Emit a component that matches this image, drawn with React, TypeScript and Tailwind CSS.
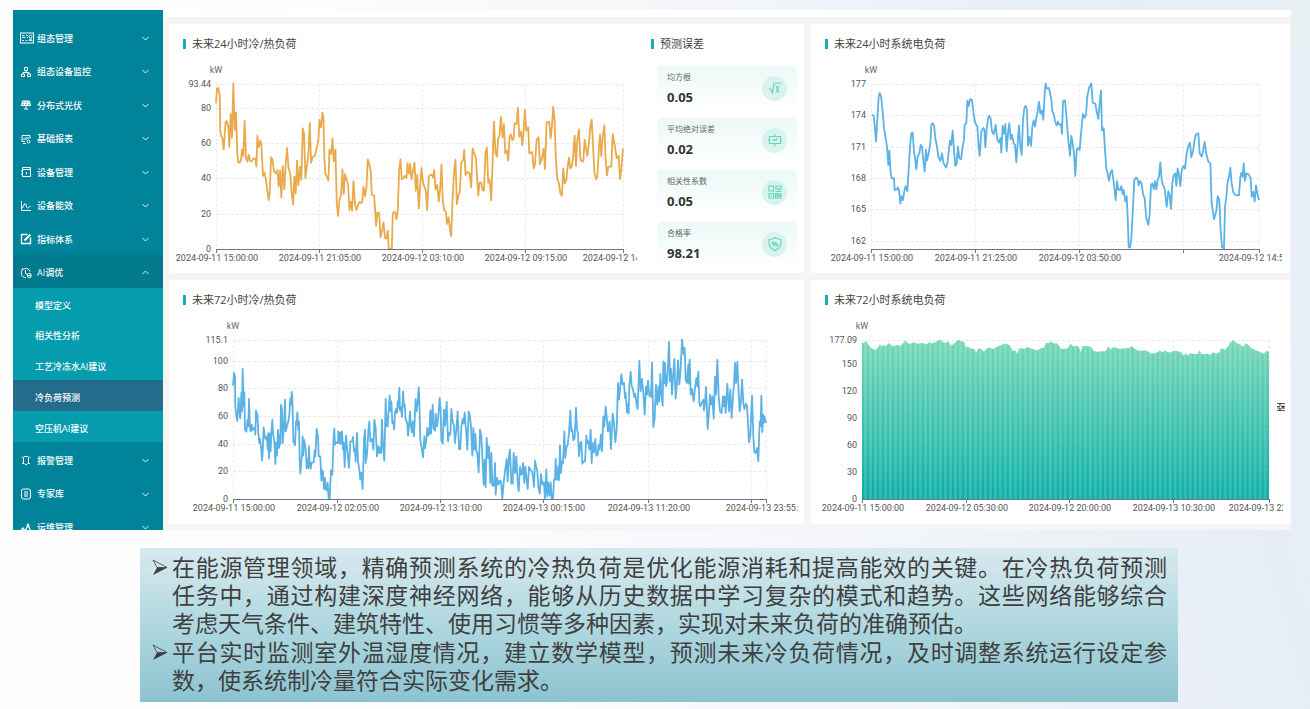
import { useLayoutEffect, useRef, useState } from "react";
import type { ReactNode } from "react";

type Tick = { at: number; label: string };

type ChartProps = {
  height: number;
  left: number;
  right: number;
  bottom: number;
  yTicks: Tick[];
  xTicks: Tick[];
  children: ReactNode;
};

// plot series are drawn in the plot's own units, 3 per pixel at the default size
const COLD_24H =
  "154,250 157,206 161,204 165,225 167,335 170,350 173,353 177,388 180,345 183,305 186,303 191,320 194,380 198,282 202,352 206,190 210,330 214,278 218,400 221,428 225,428 229,420 232,388 236,408 240,303 244,415 248,425 252,404 256,422 261,424 266,415 272,416 275,440 278,348 282,382 287,362 290,375 295,468 299,457 303,475 307,505 312,540 315,520 319,412 323,418 328,455 334,460 338,450 342,500 346,452 350,532 354,438 359,508 363,430 367,384 371,440 377,465 381,520 385,553 389,470 393,520 397,422 401,496 406,440 410,480 414,325 418,340 422,474 428,425 431,400 435,309 439,428 443,412 450,408 456,385 461,358 464,300 469,322 473,278 476,290 479,420 482,462 487,470 491,482 494,390 499,402 503,355 507,424 512,388 516,550 520,588 524,540 529,525 533,448 537,522 541,462 546,482 550,492 554,570 558,545 562,572 566,484 571,555 575,570 580,555 584,546 590,550 593,540 596,500 601,528 605,500 609,418 614,435 618,455 621,525 628,527 634,617 638,577 643,580 647,651 652,632 656,607 661,655 666,655 669,632 672,686 681,686 684,580 688,575 692,580 695,597 699,570 703,450 707,418 711,478 716,475 720,468 725,474 728,430 732,460 736,432 740,478 744,455 749,428 753,512 757,465 762,565 766,500 770,444 775,490 783,512 787,570 792,470 797,464 802,466 805,472 808,450 812,508 817,495 822,545 826,505 830,434 834,545 838,570 843,575 846,612 851,592 855,625 859,648 863,540 868,450 872,420 876,552 881,525 885,515 889,428 895,420 898,390 902,465 907,456 914,460 919,502 923,385 928,400 933,415 940,527 944,488 949,487 953,510 957,512 962,395 966,383 970,488 974,478 979,541 983,430 987,305 992,400 996,410 1000,355 1004,345 1008,291 1013,352 1017,312 1021,400 1026,392 1030,422 1034,350 1038,343 1042,360 1046,357 1049,310 1055,312 1059,264 1063,350 1068,335 1072,376 1076,335 1080,270 1084,332 1090,322 1093,400 1102,396 1106,445 1110,435 1115,360 1121,352 1125,432 1131,415 1136,386 1140,447 1145,308 1153,305 1157,355 1161,320 1165,260 1169,300 1172,400 1177,478 1182,490 1186,520 1191,527 1195,445 1199,490 1204,480 1207,450 1212,413 1216,445 1221,440 1225,400 1229,347 1233,438 1237,360 1242,328 1246,415 1250,424 1255,424 1259,360 1267,408 1272,370 1276,320 1280,299 1284,370 1288,455 1293,478 1297,470 1301,400 1305,344 1309,408 1313,350 1318,316 1322,420 1326,466 1330,440 1339,440 1343,342 1349,375 1355,415 1361,407 1365,477 1369,450 1374,385";

const POWER_24H =
  "202,345 207,348 210,375 214,425 218,360 222,290 225,280 229,290 234,335 238,385 243,415 247,440 251,495 254,452 258,520 261,535 268,534 270,570 276,568 280,562 283,570 287,610 291,588 295,600 299,572 303,558 308,573 312,510 316,440 320,400 324,398 328,455 332,480 335,508 339,470 344,460 348,435 352,440 356,480 360,515 364,450 367,482 372,460 377,430 380,375 384,370 388,376 392,415 397,440 401,470 407,483 412,460 416,487 421,498 425,503 429,485 432,455 436,422 440,435 444,392 448,450 452,498 456,490 460,440 464,475 469,478 474,440 478,420 480,375 485,370 488,303 492,320 496,298 502,300 506,335 511,368 518,380 522,440 525,468 530,395 536,384 539,388 542,442 546,390 550,355 554,348 558,358 562,395 567,403 573,375 578,420 583,428 587,415 590,458 594,378 598,402 602,373 606,454 610,400 614,370 618,418 622,405 627,430 631,435 635,487 639,430 643,377 647,440 651,465 655,360 659,325 663,318 667,330 670,436 674,410 679,438 683,380 687,362 691,380 696,350 699,335 703,306 707,342 712,332 716,360 720,280 723,252 726,267 733,265 737,285 740,300 743,335 748,345 751,365 756,377 760,365 763,374 769,374 772,402 775,305 781,302 785,345 789,400 793,440 796,468 800,408 804,430 808,460 812,528 816,450 820,444 825,450 830,390 835,342 840,354 844,345 848,290 853,265 860,251 864,308 872,312 877,340 881,357 885,310 889,273 892,392 897,385 901,450 905,505 909,520 913,542 917,520 922,510 927,545 933,600 937,543 941,568 946,570 950,558 954,582 957,570 962,604 966,588 969,650 972,740 976,742 980,715 985,620 989,540 995,532 999,538 1002,556 1006,543 1011,550 1015,582 1020,595 1025,655 1031,674 1035,640 1039,555 1043,550 1047,567 1051,543 1055,568 1059,540 1063,530 1067,487 1071,540 1075,555 1080,565 1086,620 1091,573 1095,585 1099,626 1103,550 1107,525 1112,520 1115,557 1119,505 1123,525 1127,558 1131,510 1136,498 1141,506 1146,460 1151,438 1156,428 1160,472 1165,455 1169,425 1173,405 1181,400 1185,460 1191,470 1195,455 1200,426 1205,462 1211,485 1217,490 1221,610 1225,635 1228,657 1233,640 1236,625 1239,588 1244,600 1248,690 1252,740 1258,745 1261,620 1265,590 1269,545 1273,530 1277,503 1281,550 1286,577 1292,584 1303,586 1307,530 1310,519 1314,530 1317,490 1321,542 1325,520 1332,523 1338,535 1341,590 1346,575 1350,604 1354,556 1358,580 1363,600";

const COLD_72H =
  "205,318 208,280 211,290 212,380 214,400 218,424 222,355 225,400 227,416 230,340 232,395 234,268 237,380 239,338 241,450 245,456 249,420 251,440 253,358 256,445 258,455 261,435 263,452 268,445 271,443 272,465 274,392 276,415 278,403 281,460 284,490 286,478 289,500 292,542 294,520 297,443 301,475 305,480 307,470 309,510 311,460 313,537 316,462 318,515 320,460 323,420 325,460 329,485 332,553 335,488 337,528 340,450 343,505 345,465 347,495 349,375 352,390 354,490 358,440 361,360 363,455 367,440 371,425 374,405 377,356 379,375 381,337 383,350 386,485 391,497 394,425 396,435 398,398 401,450 403,425 405,540 407,582 410,540 412,530 414,470 416,528 418,480 421,495 424,520 426,565 429,540 431,566 433,500 435,550 438,567 441,548 447,548 450,512 452,530 456,448 460,470 462,530 467,530 470,603 473,572 475,580 478,628 481,595 484,630 487,632 489,610 492,657 495,657 499,572 503,585 507,470 509,447 511,495 516,488 520,490 521,455 524,490 526,458 529,493 532,455 535,510 537,488 540,562 544,468 547,500 553,565 557,485 562,485 565,472 568,515 571,508 573,545 577,460 580,545 584,570 587,600 590,580 594,628 598,480 601,450 603,550 607,525 611,455 614,425 617,485 622,478 626,510 629,420 633,445 637,530 641,500 644,520 647,503 649,520 652,420 655,500 659,543 663,358 666,440 669,440 672,395 675,348 678,395 680,365 683,430 686,425 688,450 691,400 694,388 697,400 699,365 701,385 704,325 706,393 709,382 712,412 715,335 718,380 720,375 723,420 728,430 730,468 733,440 736,395 739,440 742,458 745,425 748,470 751,400 753,358 756,395 759,370 762,323 764,360 767,480 770,500 775,533 779,470 781,505 785,480 788,445 791,468 794,460 797,392 799,462 804,376 807,448 811,453 813,402 817,440 821,410 825,355 828,390 830,480 834,492 838,390 841,438 846,367 850,485 853,460 857,465 860,388 864,425 868,440 871,490 875,450 879,395 883,508 887,508 890,440 894,418 897,432 900,398 904,450 908,510 912,395 916,410 919,440 923,528 926,445 929,510 932,463 935,515 938,520 942,578 946,450 950,470 953,530 957,615 960,540 963,622 966,475 970,535 973,500 977,610 980,520 983,618 988,618 991,550 993,645 997,595 1001,615 1005,603 1009,605 1013,657 1017,608 1021,575 1026,538 1029,605 1033,530 1036,510 1040,612 1044,612 1047,520 1051,580 1055,530 1059,610 1062,635 1066,562 1070,585 1073,580 1075,550 1079,610 1082,560 1086,600 1089,628 1093,562 1097,570 1102,575 1105,590 1108,622 1111,543 1114,560 1118,575 1121,620 1125,642 1129,583 1133,615 1138,608 1141,657 1145,570 1148,650 1151,608 1155,648 1158,608 1161,657 1165,657 1168,600 1171,600 1173,538 1176,600 1179,595 1181,560 1183,602 1186,497 1189,580 1192,545 1195,550 1199,455 1202,535 1205,505 1209,495 1213,460 1217,393 1220,455 1223,450 1226,482 1230,475 1234,384 1237,450 1240,460 1243,530 1247,490 1250,486 1253,552 1257,545 1261,545 1265,468 1268,490 1271,485 1274,510 1278,450 1281,550 1284,490 1288,518 1292,478 1295,528 1299,525 1302,495 1305,510 1309,465 1312,515 1316,410 1319,440 1323,380 1327,420 1330,455 1335,425 1339,508 1344,402 1348,430 1352,488 1356,450 1360,310 1363,360 1366,330 1370,284 1374,315 1378,310 1381,355 1383,340 1387,398 1389,375 1392,402 1394,318 1398,277 1401,318 1405,330 1409,352 1412,343 1416,375 1419,388 1424,244 1428,335 1432,298 1436,340 1440,405 1444,320 1447,345 1450,303 1454,348 1457,340 1459,352 1462,248 1466,442 1470,415 1474,315 1478,375 1482,320 1484,365 1487,283 1490,340 1494,378 1496,245 1499,310 1501,250 1504,320 1508,300 1513,187 1516,305 1519,268 1522,345 1526,280 1529,238 1533,357 1537,310 1540,242 1544,315 1548,265 1552,180 1557,225 1560,205 1563,300 1567,310 1571,255 1573,312 1575,240 1578,345 1582,328 1587,365 1591,325 1595,295 1598,320 1601,276 1604,370 1607,380 1611,370 1616,360 1618,392 1621,370 1624,322 1629,448 1632,410 1636,345 1639,375 1643,350 1647,417 1651,292 1654,345 1658,240 1662,350 1666,395 1671,400 1675,350 1678,380 1680,350 1683,400 1688,313 1691,365 1693,395 1697,330 1701,415 1705,350 1708,310 1711,250 1714,310 1718,247 1721,320 1725,395 1729,365 1732,300 1736,370 1739,388 1744,372 1747,380 1750,430 1753,488 1757,465 1762,348 1766,470 1769,518 1773,520 1777,505 1781,545 1785,425 1788,440 1790,348 1793,457 1795,405 1797,430 1799,410 1804,430";

const POWER_72H =
  "172,190 178,190 183,183 188,190 195,200 203,207 210,210 217,208 222,200 226,192 230,200 237,197 245,198 254,190 260,197 268,200 276,196 284,198 292,196 297,188 303,182 309,190 316,193 328,188 340,192 352,190 366,194 376,186 382,192 392,186 397,185 404,180 410,182 415,188 423,190 430,185 437,195 443,197 450,190 456,184 463,180 470,185 478,186 484,203 494,203 503,208 510,208 515,220 522,205 530,208 538,216 545,208 555,203 562,208 570,206 580,200 590,196 600,192 610,194 617,198 625,215 632,212 638,222 644,206 652,206 660,208 668,202 680,206 690,210 700,212 708,206 718,204 724,190 732,190 740,185 748,192 755,190 762,196 770,208 780,207 790,206 798,192 806,200 818,198 824,204 829,218 835,198 850,200 860,202 868,214 880,216 905,214 911,200 918,208 930,202 945,208 960,206 972,206 983,199 990,208 1000,212 1010,214 1022,212 1032,216 1042,222 1052,220 1060,218 1066,212 1074,218 1082,212 1090,218 1100,218 1108,213 1118,214 1130,218 1138,228 1144,220 1150,228 1158,220 1170,224 1180,222 1185,212 1192,224 1210,222 1218,226 1226,218 1236,222 1246,216 1250,206 1262,210 1270,202 1276,190 1286,181 1294,188 1302,192 1310,196 1317,202 1323,191 1332,196 1342,206 1350,210 1360,214 1370,218 1378,222 1386,214 1394,216";

const PLOT_TOP = 20;

function scale(labels: string[], min: number, max: number): Tick[] {
  return labels.map((label) => ({
    at: (Number(label) - min) / (max - min),
    label,
  }));
}

function Chart({
  height,
  left,
  right,
  bottom,
  yTicks,
  xTicks,
  children,
}: ChartProps) {
  const ref = useRef<HTMLDivElement>(null);
  const [width, setWidth] = useState(0);

  useLayoutEffect(() => {
    const el = ref.current;
    if (!el) return;
    const measure = () => setWidth(el.clientWidth);
    measure();
    const observer = new ResizeObserver(measure);
    observer.observe(el);
    return () => observer.disconnect();
  }, []);

  const plotW = Math.max(width - left - right, 0);
  const plotH = bottom - PLOT_TOP;

  return (
    <div ref={ref} className="min-w-0 overflow-hidden">
      <svg
        width={width}
        height={height}
        className="block font-['Roboto',sans-serif] text-[9px]"
      >
        {yTicks.map((t) => {
          const y = Math.round(bottom - t.at * plotH);
          return (
            <g key={t.label}>
              <line
                x1={left}
                x2={left + plotW}
                y1={y + 0.5}
                y2={y + 0.5}
                stroke="#e8e8e8"
                strokeDasharray="3 2"
              />
              <text x={left - 5} y={y + 3} textAnchor="end" fill="#555">
                {t.label}
              </text>
            </g>
          );
        })}
        {xTicks.map((t) => {
          const x = Math.round(left + t.at * plotW);
          return (
            <g key={t.at}>
              <line
                x1={x + 0.5}
                x2={x + 0.5}
                y1={PLOT_TOP}
                y2={bottom}
                stroke="#ededed"
                strokeDasharray="3 2"
              />
              <text x={x + 1} y={bottom + 12} textAnchor="middle" fill="#555">
                {t.label}
              </text>
            </g>
          );
        })}
        <text x={left} y={9} textAnchor="middle" fill="#5f6679">
          kW
        </text>
        <svg
          x={left}
          y={PLOT_TOP}
          width={plotW}
          height={plotH}
          overflow="visible"
        >
          {children}
        </svg>
        <line
          x1={left}
          x2={left + plotW}
          y1={bottom + 0.5}
          y2={bottom + 0.5}
          stroke="#6e7791"
        />
        {xTicks.map((t) => {
          const x = Math.round(left + t.at * plotW) + 0.5;
          return (
            <line
              key={t.at}
              x1={x}
              x2={x}
              y1={bottom}
              y2={bottom + 4}
              stroke="#6e7791"
            />
          );
        })}
      </svg>
    </div>
  );
}

function Line({
  points,
  viewBox,
  color,
}: {
  points: string;
  viewBox: string;
  color: string;
}) {
  return (
    <svg
      width="100%"
      height="100%"
      viewBox={viewBox}
      preserveAspectRatio="none"
      overflow="visible"
    >
      <polyline
        points={points}
        fill="none"
        stroke={color}
        strokeWidth="1.8"
        strokeLinejoin="round"
        vectorEffect="non-scaling-stroke"
      />
    </svg>
  );
}

function Bars() {
  const outline = `172,658 ${POWER_72H} 1394,658`;
  return (
    <svg
      width="100%"
      height="100%"
      viewBox="172 181 1222 477"
      preserveAspectRatio="none"
      overflow="visible"
    >
      <defs>
        <linearGradient id="bars" x1="0" y1="0" x2="0" y2="1">
          <stop offset="0" stopColor="#74d7b6" />
          <stop offset="1" stopColor="#08aea6" />
        </linearGradient>
        <pattern
          id="gaps"
          width="15"
          height="477"
          x="172"
          patternUnits="userSpaceOnUse"
        >
          <rect x="6" width="9" height="477" fill="#fff" fillOpacity="0.16" />
        </pattern>
      </defs>
      <polygon points={outline} fill="url(#bars)" />
      <polygon points={outline} fill="url(#gaps)" />
    </svg>
  );
}

function Title({ children }: { children: ReactNode }) {
  return (
    <h2 className="flex h-10 items-center gap-1.5 px-3.5 text-[11px] text-[#444]">
      <span className="h-2.5 w-[3px] bg-[#14b3a9]" />
      {children}
    </h2>
  );
}

function Icon({
  children,
  strokeWidth = 1,
}: {
  children: ReactNode;
  strokeWidth?: number;
}) {
  return (
    <svg
      width="12"
      height="12"
      viewBox="0 0 12 12"
      fill="none"
      stroke="currentColor"
      strokeWidth={strokeWidth}
      className="shrink-0 overflow-visible"
    >
      {children}
    </svg>
  );
}

const topMenu = [
  {
    label: "组态管理",
    icon: (
      <svg
        width="14"
        height="12"
        viewBox="0 0 14 12"
        fill="none"
        stroke="currentColor"
        className="-mr-0.5 shrink-0"
      >
        <rect x="0.5" y="1" width="13" height="10" />
        <path
          d="M2 3.500h2.500M2 5.500h3.500M2 8.500h2M5.500 8.500h2M6 3.500h2M7 5.500h1M9 8.500h3.500M9 7.200h3"
          strokeWidth="0.900"
        />
        <circle cx="10.500" cy="4.500" r="1.500" strokeWidth="0.900" />
      </svg>
    ),
  },
  {
    label: "组态设备监控",
    icon: (
      <Icon>
        <path d="M4.500 1.500h3v3h-3zM1.500 8h3v2.500h-3zM7.500 8h3v2.500h-3zM6 4.500v2M3 8V6.500h6V8" />
      </Icon>
    ),
  },
  {
    label: "分布式光伏",
    icon: (
      <Icon>
        <path d="M2.500 2h7l1 4.500h-9z" fill="currentColor" fillOpacity="0.4" />
        <path d="M2 4.300h8M4.700 2v4.500M7.300 2v4.500M6 6.500V10M4 10h4" />
      </Icon>
    ),
  },
  {
    label: "基础报表",
    icon: (
      <Icon>
        <path d="M5 8.500H2v-6h8v3M4 7V5M6 7V4M8 6V4M3 10.500h3" />
        <circle cx="8.500" cy="8.500" r="1.500" />
      </Icon>
    ),
  },
  {
    label: "设备管理",
    icon: (
      <Icon>
        <path d="M2.500 1.500h8v9h-8zM3 3.500h7M1 5h2M1 8h2M6.500 6v2.500" />
      </Icon>
    ),
  },
  {
    label: "设备能效",
    icon: (
      <Icon>
        <path d="M1.500 1v9.500H11M2 8c2 0 1.500-4.500 3-4.500S6 8 7.500 8 9 6 10.500 6.500" />
      </Icon>
    ),
  },
  {
    label: "指标体系",
    icon: (
      <Icon>
        <path d="M7.500 1.500h-6v9h9v-6" strokeWidth="1.300" />
        <path d="M4.500 7.500L10.500 1.500" strokeWidth="2" />
      </Icon>
    ),
  },
  {
    label: "AI调优",
    open: true,
    icon: (
      <Icon>
        <path d="M6 10.500A4.500 4.500 0 1 1 10 4.500M3 1.500l-1.500 1M5.500 3v3.500l2 1" />
        <rect x="7.500" y="6.500" width="3.500" height="4" rx="1" />
        <path d="M8 8.500h3" />
      </Icon>
    ),
  },
];

const subMenu = [
  "模型定义",
  "相关性分析",
  "工艺冷冻水AI建议",
  "冷负荷预测",
  "空压机AI建议",
];

const bottomMenu = [
  {
    label: "报警管理",
    icon: (
      <Icon>
        <path d="M3.500 9V3.500a1 1 0 0 1 1-1h3a1 1 0 0 1 1 1V9M2 9.500h2.500M7.500 9.500H10M5 10.500h2M1.500 3l1 .5M10.500 3l-1 .5" />
      </Icon>
    ),
  },
  {
    label: "专家库",
    icon: (
      <Icon>
        <rect x="1.500" y="1" width="9" height="10" rx="2" />
        <path d="M4 4h4M4 6h4M4 8h4" />
      </Icon>
    ),
  },
  {
    label: "运维管理",
    icon: (
      <Icon>
        <path d="M1 8l2-2 2 3 3-6 3 7" strokeWidth="1.300" />
        <circle cx="8" cy="3" r="1" />
      </Icon>
    ),
  },
];

function MenuItem({
  label,
  icon,
  open,
}: {
  label: string;
  icon: ReactNode;
  open?: boolean;
}) {
  return (
    <button
      type="button"
      className={`flex w-full flex-1 items-center gap-[5px] pt-[3px] pr-3.5 pl-[7px] text-left ${
        open ? "bg-[#017a8d]" : ""
      }`}
    >
      {icon}
      <span className="flex-1">{label}</span>
      <svg
        width="7"
        height="5"
        viewBox="0 0 7 5"
        fill="none"
        stroke="currentColor"
        strokeWidth="0.900"
      >
        <path d={open ? "M.5 4l3-3 3 3" : "M.5 1l3 3 3-3"} />
      </svg>
    </button>
  );
}

function Sidebar() {
  return (
    <nav className="flex h-[520px] w-[150px] shrink-0 flex-col overflow-hidden bg-[#018499] pt-2.5 text-[9px] font-medium text-white">
      <div className="flex h-[268px] shrink-0 flex-col">
        {topMenu.map((m) => (
          <MenuItem key={m.label} {...m} />
        ))}
      </div>
      <div className="flex h-[154px] shrink-0 flex-col bg-[#059cad]">
        {subMenu.map((label) => (
          <a
            key={label}
            href="#"
            className={`flex flex-1 items-center pt-1 pl-[22px] ${
              label === "冷负荷预测" ? "bg-[#236c8c]" : ""
            }`}
          >
            {label}
          </a>
        ))}
      </div>
      <div className="flex h-[101px] shrink-0 flex-col">
        {bottomMenu.map((m) => (
          <MenuItem key={m.label} {...m} />
        ))}
      </div>
    </nav>
  );
}

const metrics = [
  {
    label: "均方根",
    value: "0.05",
    icon: (
      <path d="M0 7h1.500l2 4L5 1h7.500M6.500 3.500c1.500 0 2.500 7 4 7M10.500 3.500c-1.500 0-2.500 7-4 7" />
    ),
  },
  {
    label: "平均绝对误差",
    value: "0.02",
    icon: (
      <path d="M.5 2.500h11v7H.5zM6 .5v2M6 9.500v2.500M3.500 7l1.500-1.500 1.500 1 2-2M-1 6h1.500M11.500 6H13" />
    ),
  },
  {
    label: "相关性系数",
    value: "0.05",
    icon: (
      <path d="M0 0h4.500v5H0zM0 7.500h4.500V12H0zM7 0h5v3H7zM6.500 5.500H12.500M6.500 7.500h2V12h-2zM10 7.500h2V12h-2zM6.500 9.500H12M2.200 9v1.500M9.500 3v2.500" />
    ),
  },
  {
    label: "合格率",
    value: "98.21",
    icon: (
      <>
        <path d="M6-.5c1.500 1 4 2 6 2v4c0 3.500-3 5.500-6 7-3-1.500-6-3.500-6-7v-4c2 0 4.500-1 6-2zM4.500 8.500l3-5" />
        <circle cx="4" cy="5" r="1" />
        <circle cx="8" cy="7" r="1" />
      </>
    ),
  },
];

function Metrics() {
  return (
    <section className="w-[167px] shrink-0">
      <Title>预测误差</Title>
      <dl className="mt-0.5 flex flex-col gap-2 pr-[7px] pl-5">
        {metrics.map((m) => (
          <div
            key={m.label}
            className="flex h-11 items-center justify-between rounded bg-linear-to-b from-[#ebf9f7] to-white px-2.5"
          >
            <div className="pt-0.5">
              <dt className="text-[8px] leading-3 text-[#666]">{m.label}</dt>
              <dd className="mt-1 text-[13px] leading-5 font-bold text-[#333]">
                {m.value}
              </dd>
            </div>
            <span className="flex size-[25px] items-center justify-center rounded-full bg-[#d9f3ef] text-[#6bd5b5]">
              <Icon strokeWidth={1.2}>{m.icon}</Icon>
            </span>
          </div>
        ))}
      </dl>
    </section>
  );
}

const notes = [
  {
    full: [
      "在能源管理领域，精确预测系统的冷热负荷是优化能源消耗和提高能效的关键。在冷热负荷预测",
      "任务中，通过构建深度神经网络，能够从历史数据中学习复杂的模式和趋势。这些网络能够综合",
    ],
    last: "考虑天气条件、建筑特性、使用习惯等多种因素，实现对未来负荷的准确预估。",
  },
  {
    full: [
      "平台实时监测室外温湿度情况，建立数学模型，预测未来冷负荷情况，及时调整系统运行设定参",
    ],
    last: "数，使系统制冷量符合实际变化需求。",
  },
];

function Notes() {
  return (
    <ul className="mt-[18px] mr-[132px] ml-[140px] flex flex-col gap-px bg-linear-to-b from-[#d8eaef] via-[#b0d8e0] to-[#8cc3d0] pt-1 pr-[11px] pb-[9px] pl-3 font-['Noto_Sans_CJK_SC',sans-serif] text-[23px] leading-7 text-[#404040]">
      {notes.map((n) => (
        <li key={n.last} className="flex gap-1">
          <svg width="16" height="30" viewBox="0 0 16 30" className="shrink-0">
            <path
              d="M1 8L15 15.500 5 15.500z"
              fill="none"
              stroke="#404040"
              strokeWidth="0.800"
            />
            <path d="M15.500 15.500L1 23 5 15.500z" fill="#404040" />
          </svg>
          <p className="min-w-0 flex-1">
            {n.full.map((line) => (
              <span key={line} className="block [text-align-last:justify]">
                {line}
              </span>
            ))}
            <span className="block">{n.last}</span>
          </p>
        </li>
      ))}
    </ul>
  );
}

export default function App() {
  return (
    <div className="min-h-screen bg-[linear-gradient(75deg,#fefefe_0%,#fbfcfd_35%,#f1f4f9_65%,#e6edf5_88%,#eaf1f5_100%)] pt-2.5 font-['Open_Sans','Noto_Sans_CJK_SC',sans-serif]">
      <div className="mr-[19px] ml-[13px] flex bg-[#f5f5f5]">
        <Sidebar />
        <main className="min-w-0 flex-1">
          <div className="h-[7px] bg-white" />
          <div className="grid grid-cols-[635fr_479fr] gap-[7px] pt-[7px] pr-px pb-1.5 pl-1.5">
            <div className="flex min-w-0 bg-white">
              <section className="min-w-0 flex-1">
                <Title>未来24小时冷/热负荷</Title>
                <Chart
                  height={209}
                  left={47}
                  right={14}
                  bottom={185}
                  yTicks={scale(["93.44", "80", "60", "40", "20", "0"], 0, 93.44)}
                  xTicks={[
                    { at: 0, label: "2024-09-11 15:00:00" },
                    { at: 0.2525, label: "2024-09-11 21:05:00" },
                    { at: 0.507, label: "2024-09-12 03:10:00" },
                    { at: 0.76, label: "2024-09-12 09:15:00" },
                    { at: 1, label: "2024-09-12 14:55:00" },
                  ]}
                >
                  <Line
                    points={COLD_24H}
                    viewBox="154 192 1220 495"
                    color="#e9aa4b"
                  />
                </Chart>
              </section>
              <Metrics />
            </div>

            <section className="min-w-0 bg-white pr-2">
              <Title>未来24小时系统电负荷</Title>
              <Chart
                height={209}
                left={60}
                right={23}
                bottom={185}
                yTicks={scale(
                  ["177", "174", "171", "168", "165", "162"],
                  161.2,
                  177,
                )}
                xTicks={[
                  { at: 0, label: "2024-09-11 15:00:00" },
                  { at: 0.268, label: "2024-09-11 21:25:00" },
                  { at: 0.536, label: "2024-09-12 03:50:00" },
                  { at: 0.804, label: "" },
                  { at: 1, label: "2024-09-12 14:55:00" },
                ]}
              >
                <Line
                  points={POWER_24H}
                  viewBox="199 253 1164 493"
                  color="#5bb2e5"
                />
              </Chart>
            </section>

            <section className="min-w-0 bg-white pr-1.5">
              <Title>未来72小时冷/热负荷</Title>
              <Chart
                height={204}
                left={64}
                right={32}
                bottom={179}
                yTicks={scale(
                  ["115.1", "100", "80", "60", "40", "20", "0"],
                  0,
                  115.1,
                )}
                xTicks={[
                  { at: 0, label: "2024-09-11 15:00:00" },
                  { at: 0.195, label: "2024-09-12 02:05:00" },
                  { at: 0.389, label: "2024-09-12 13:10:00" },
                  { at: 0.582, label: "2024-09-13 00:15:00" },
                  { at: 0.778, label: "2024-09-13 11:20:00" },
                  { at: 0.9725, label: "" },
                  { at: 1, label: "2024-09-13 23:55:00" },
                ]}
              >
                <Line
                  points={COLD_72H}
                  viewBox="205 181 1599 477"
                  color="#5bb2e5"
                />
              </Chart>
            </section>

            <section className="relative min-w-0 bg-white pr-[7px]">
              <Title>未来72小时系统电负荷</Title>
              <Chart
                height={204}
                left={51}
                right={14}
                bottom={179}
                yTicks={scale(
                  ["177.09", "150", "120", "90", "60", "30", "0"],
                  0,
                  177.09,
                )}
                xTicks={[
                  { at: 0, label: "2024-09-11 15:00:00" },
                  { at: 0.2545, label: "2024-09-12 05:30:00" },
                  { at: 0.509, label: "2024-09-12 20:00:00" },
                  { at: 0.7635, label: "2024-09-13 10:30:00" },
                  { at: 1, label: "2024-09-13 23:55:00" },
                ]}
              >
                <Bars />
              </Chart>
              <button
                type="button"
                aria-label="图表设置"
                className="absolute top-[122px] right-[5px]"
              >
                <svg
                  width="8"
                  height="10"
                  viewBox="0 0 8 10"
                  fill="none"
                  stroke="#333"
                >
                  <path
                    d="M0 1.500h8M0 4.500h3M4 4.500h4M0 6h3M4 6h4M0 8.500h8"
                    strokeWidth="0.800"
                  />
                  <path d="M3 1v2.500M3 6v3M6 3.500v3" strokeWidth="1.400" />
                </svg>
              </button>
            </section>
          </div>
        </main>
      </div>
      <Notes />
    </div>
  );
}
